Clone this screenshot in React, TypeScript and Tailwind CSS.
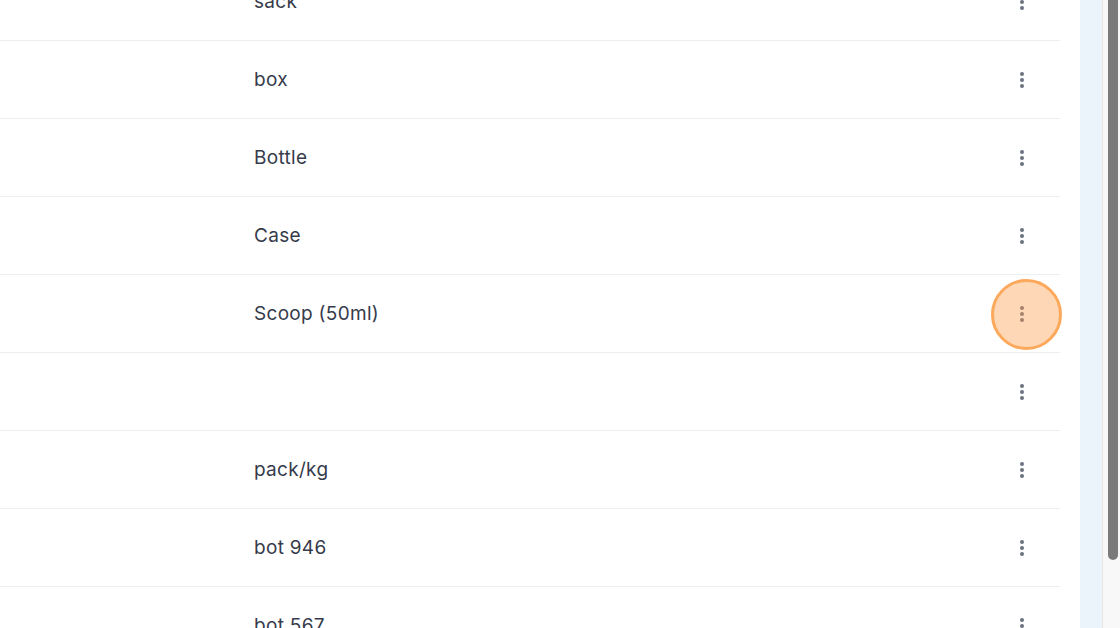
import React from 'react'

const rows = ['sack', 'box', 'Bottle', 'Case', 'Scoop (50ml)', '', 'pack/kg', 'bot 946', 'bot 567']

// vertical "more" dots
const Kebab = () => (
  <svg width="8" height="18" viewBox="0 0 8 18" className="text-[#6b7280]">
    <circle cx="4" cy="3" r="2" fill="currentColor" />
    <circle cx="4" cy="9" r="2" fill="currentColor" />
    <circle cx="4" cy="15" r="2" fill="currentColor" />
  </svg>
)

function Row({ label, active }: { label: string; active?: boolean }) {
  return (
    <div className="flex h-[78px] shrink-0 items-center border-b border-[#eceef2]">
      <div className="w-[254px] shrink-0" />
      <div className="flex-1 pt-[2px] text-[19px] tracking-[0.3px] text-[#363b4b]">{label}</div>
      <div className="relative mr-[18px] flex h-10 w-10 items-center justify-center">
        <Kebab />
        {active && (
          <div className="absolute left-[-11px] top-[-15px] h-[71px] w-[71px] rounded-full border-[3px] border-[#fda95c] bg-[#fd9a4a]/40" />
        )}
      </div>
    </div>
  )
}

export default function App() {
  return (
    <div
      className="flex h-[628px] w-[1120px] overflow-hidden bg-white"
      style={{ fontFamily: 'Inter, "Noto Sans", sans-serif' }}
    >
      <div className="flex w-[1060px] shrink-0 flex-col">
        <div className="-mt-[37px] flex flex-col">
          {rows.map((r, i) => (
            <Row key={i} label={r} active={i === 4} />
          ))}
        </div>
      </div>
      <div className="w-[20px] shrink-0 bg-white" />
      <div className="w-[22px] shrink-0 bg-[#ebf3fb]" />
      <div className="flex w-[18px] shrink-0 justify-center border-l border-[#e6e6e6] bg-[#f8f8f8] pl-[2px]">
        <div className="h-[560px] w-[10px] rounded-b-full bg-[#7a7a7a]" />
      </div>
    </div>
  )
}
